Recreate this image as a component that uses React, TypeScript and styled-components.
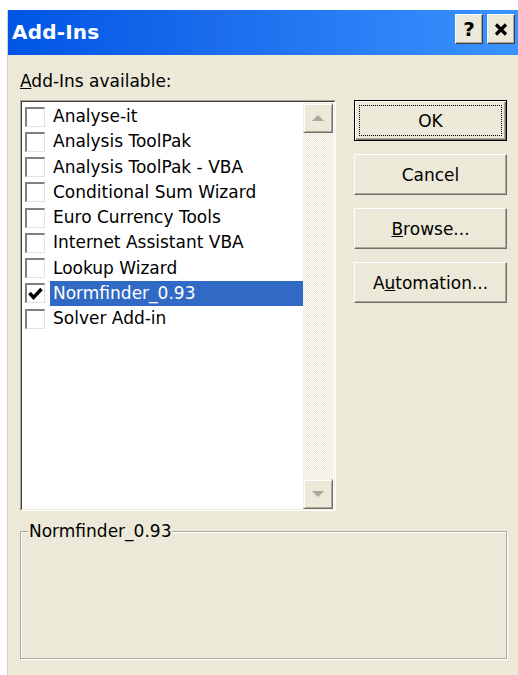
import styled, { createGlobalStyle } from 'styled-components';

interface AddIn {
  name: string;
  checked: boolean;
}

const addIns: AddIn[] = [
  { name: 'Analyse-it', checked: false },
  { name: 'Analysis ToolPak', checked: false },
  { name: 'Analysis ToolPak - VBA', checked: false },
  { name: 'Conditional Sum Wizard', checked: false },
  { name: 'Euro Currency Tools', checked: false },
  { name: 'Internet Assistant VBA', checked: false },
  { name: 'Lookup Wizard', checked: false },
  { name: 'Normfinder_0.93', checked: true },
  { name: 'Solver Add-in', checked: false },
];

const selected = 'Normfinder_0.93';

const GlobalStyle = createGlobalStyle`
  html, body {
    margin: 0;
    background: #ffffff;
    overflow: hidden;
  }
  body {
    font-family: 'DejaVu Sans', 'Liberation Sans', sans-serif;
    font-size: 17px;
    color: #000;
  }
`;

const CheckMark = () => (
  <svg width="15" height="14" viewBox="0 0 15 14">
    <path d="M1.5 6 L5.5 10.5 L13.5 2" fill="none" stroke="#000" strokeWidth="3.4" />
  </svg>
);

const CloseGlyph = () => (
  <svg width="14" height="13" viewBox="0 0 14 13">
    <path d="M2 1.5 L12 11.5 M12 1.5 L2 11.5" stroke="#000" strokeWidth="3.2" />
  </svg>
);

const App = () => {
  return (
    <>
      <GlobalStyle />
      <Window>
        <TitleBar>
          <Caption>Add-Ins</Caption>
          <CaptionButtons>
            <CaptionButton>?</CaptionButton>
            <CaptionButton>
              <CloseGlyph />
            </CaptionButton>
          </CaptionButtons>
        </TitleBar>

        <Body>
          <FieldLabel>
            <u>A</u>dd-Ins available:
          </FieldLabel>

          <MainRow>
            <ListBox>
              <ListInner>
                <Items>
                  {addIns.map((item) => (
                    <Row key={item.name}>
                      <CheckBox>{item.checked && <CheckMark />}</CheckBox>
                      <ItemText $selected={item.name === selected}>{item.name}</ItemText>
                    </Row>
                  ))}
                </Items>
                <ScrollBar>
                  <ScrollButton>
                    <Arrow $dir="up" />
                  </ScrollButton>
                  <Track />
                  <ScrollButton>
                    <Arrow $dir="down" />
                  </ScrollButton>
                </ScrollBar>
              </ListInner>
            </ListBox>

            <ButtonColumn>
              <PushButton $default>OK</PushButton>
              <PushButton>Cancel</PushButton>
              <PushButton>
                <u>B</u>rowse...
              </PushButton>
              <PushButton>
                A<u>u</u>tomation...
              </PushButton>
            </ButtonColumn>
          </MainRow>

          <GroupBox>
            <GroupLegend>{selected}</GroupLegend>
          </GroupBox>
        </Body>
      </Window>
    </>
  );
};

export default App;

const Window = styled.div`
  margin: 10px 0 0 7px;
  width: 511px;
  height: 665px;
  background: #ece9d8;
  border-left: 1px solid #d8d5c6;
  display: flex;
  flex-direction: column;
`;

const TitleBar = styled.div`
  height: 45px;
  display: flex;
  justify-content: space-between;
  align-items: flex-start;
  padding: 0 4px 0 4px;
  background: linear-gradient(to right, #0055e5 0%, #1a6cec 40%, #3a94ff 100%);
`;

const Caption = styled.span`
  font-family: 'DejaVu Sans', sans-serif;
  font-weight: bold;
  font-size: 20px;
  line-height: 45px;
  color: #fff;
  letter-spacing: 0.2px;
`;

const CaptionButtons = styled.div`
  display: flex;
  gap: 4px;
  padding-top: 4px;
`;

const CaptionButton = styled.div`
  width: 28px;
  height: 30px;
  box-sizing: border-box;
  background: #ece9d8;
  border-top: 1px solid #fff;
  border-left: 1px solid #fff;
  border-right: 1px solid #404040;
  border-bottom: 1px solid #404040;
  box-shadow: inset -1px -1px 0 #aca899;
  display: flex;
  align-items: center;
  justify-content: center;
  font-weight: bold;
  font-size: 20px;
`;

const Body = styled.div`
  flex: 1;
  padding: 16px 12px 0 12px;
`;

const FieldLabel = styled.div`
  line-height: 20px;
  margin-bottom: 9px;
`;

const MainRow = styled.div`
  display: flex;
  gap: 18px;
  align-items: flex-start;
`;

const ListBox = styled.div`
  width: 317px;
  height: 411px;
  box-sizing: border-box;
  border-top: 1px solid #aca899;
  border-left: 1px solid #aca899;
  border-right: 1px solid #fff;
  border-bottom: 1px solid #fff;
`;

const ListInner = styled.div`
  height: 100%;
  box-sizing: border-box;
  border-top: 1px solid #3c3b36;
  border-left: 1px solid #3c3b36;
  border-right: 1px solid #f1efe2;
  border-bottom: 1px solid #f1efe2;
  background: #fff;
  display: flex;
`;

const Items = styled.div`
  flex: 1;
  padding: 2px 0 0 3px;
`;

const Row = styled.div`
  height: 25.25px;
  display: flex;
  align-items: center;
  gap: 5px;
`;

const CheckBox = styled.div`
  width: 20px;
  height: 20px;
  box-sizing: border-box;
  background: #fff;
  border-top: 2px solid #808080;
  border-left: 2px solid #808080;
  border-right: 1px solid #e4e2d6;
  border-bottom: 1px solid #e4e2d6;
  display: flex;
  align-items: center;
  justify-content: center;
`;

const ItemText = styled.span<{ $selected?: boolean }>`
  flex: 1;
  height: 25px;
  line-height: 25px;
  padding-left: 3px;
  white-space: nowrap;
  background: ${({ $selected }) => ($selected ? '#316ac5' : 'transparent')};
  color: ${({ $selected }) => ($selected ? '#fff' : '#000')};
`;

const ScrollBar = styled.div`
  width: 31px;
  display: flex;
  flex-direction: column;
  padding-top: 1px;
`;

const ScrollButton = styled.div`
  width: 30px;
  height: 30px;
  box-sizing: border-box;
  background: #ece9d8;
  border-top: 1px solid #f1efe2;
  border-left: 1px solid #f1efe2;
  border-right: 1px solid #716f64;
  border-bottom: 1px solid #716f64;
  box-shadow: inset 1px 1px 0 #fff, inset -1px -1px 0 #aca899;
  display: flex;
  align-items: center;
  justify-content: center;
`;

const Arrow = styled.div<{ $dir: 'up' | 'down' }>`
  width: 0;
  height: 0;
  border-left: 6px solid transparent;
  border-right: 6px solid transparent;
  ${({ $dir }) =>
    $dir === 'up' ? 'border-bottom: 6px solid #aca899;' : 'border-top: 6px solid #aca899;'}
`;

const Track = styled.div`
  flex: 1;
  width: 30px;
  background-color: #f4f2ea;
  background-image: repeating-conic-gradient(#ece9d8 0 25%, #fbfaf6 0 50%);
  background-size: 2px 2px;
`;

const ButtonColumn = styled.div`
  display: flex;
  flex-direction: column;
  gap: 13px;
`;

const PushButton = styled.div<{ $default?: boolean }>`
  position: relative;
  width: 153px;
  height: 41px;
  box-sizing: border-box;
  background: #ece9d8;
  display: flex;
  align-items: center;
  justify-content: center;
  border-top: 1px solid ${({ $default }) => ($default ? '#000' : '#fff')};
  border-left: 1px solid ${({ $default }) => ($default ? '#000' : '#fff')};
  border-right: 1px solid ${({ $default }) => ($default ? '#000' : '#716f64')};
  border-bottom: 1px solid ${({ $default }) => ($default ? '#000' : '#716f64')};
  box-shadow: ${({ $default }) =>
    $default
      ? 'inset 1px 1px 0 #fff, inset -1px -1px 0 #716f64, inset -2px -2px 0 #aca899'
      : 'inset -1px -1px 0 #aca899'};

  ${({ $default }) =>
    $default &&
    `
    &::after {
      content: '';
      position: absolute;
      inset: 4px;
      border: 1px dotted #000;
    }
  `}
`;

const GroupBox = styled.fieldset`
  margin: 10px 0 0 0;
  padding: 0;
  width: 487px;
  height: 138px;
  box-sizing: border-box;
  min-inline-size: 0;
  border: 1px solid #aca899;
  box-shadow: 1px 1px 0 #fff, inset 1px 1px 0 #fff;
`;

const GroupLegend = styled.legend`
  margin-left: 7px;
  padding: 0 1px;
  line-height: 20px;
  background: #ece9d8;
`;
